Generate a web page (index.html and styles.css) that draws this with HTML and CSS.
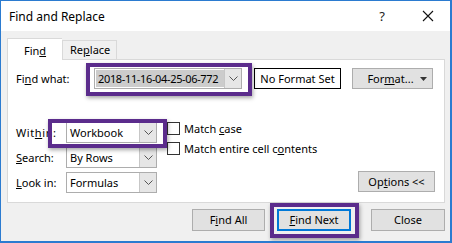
FILE: index.html
```html
<!DOCTYPE html>
<html lang="en">
<head>
  <meta charset="UTF-8">
  <title>Find and Replace</title>
  <link rel="stylesheet" href="styles.css">
</head>
<body>
  <div class="window">
    <!-- Title bar -->
    <div class="titlebar">
      <span class="title">Find and Replace</span>
      <span class="help">?</span>
      <svg class="close-x" width="12" height="12" viewBox="0 0 12 12">
        <path d="M1 1 L11 11 M11 1 L1 11" stroke="#111" stroke-width="1.1" fill="none"/>
      </svg>
    </div>

    <div class="dialog">
      <div class="tabs">
        <div class="tab active">Fin<u>d</u></div>
        <div class="tab">Re<u>p</u>lace</div>
      </div>

      <div class="panel">
        <!-- Find what row -->
        <div class="row find-row">
          <label class="label">Fi<u>n</u>d what:</label>
          <div class="combo combo-find">
            <span class="combo-text">2018-11-16-04-25-06-772</span>
            <span class="combo-btn">
              <svg width="9" height="5" viewBox="0 0 9 5"><path d="M0.5 0.5 L4.5 4.5 L8.5 0.5" stroke="#555" fill="none"/></svg>
            </span>
          </div>
          <div class="format-box">No Format Set</div>
          <div class="btn btn-format">For<u>m</u>at...
            <svg class="caret" width="7" height="4" viewBox="0 0 7 4"><path d="M0 0 H7 L3.5 4 Z" fill="#333"/></svg>
          </div>
        </div>

        <div class="options">
          <div class="selects">
            <div class="row sel-row">
              <label class="label short wide">Wit<u>h</u>in:</label>
              <div class="combo combo-small">
                <span class="combo-text">Workbook</span>
                <span class="combo-btn">
                  <svg width="9" height="5" viewBox="0 0 9 5"><path d="M0.5 0.5 L4.5 4.5 L8.5 0.5" stroke="#555" fill="none"/></svg>
                </span>
              </div>
            </div>
            <div class="row sel-row">
              <label class="label short"><u>S</u>earch:</label>
              <div class="combo combo-small">
                <span class="combo-text">By Rows</span>
                <span class="combo-btn">
                  <svg width="9" height="5" viewBox="0 0 9 5"><path d="M0.5 0.5 L4.5 4.5 L8.5 0.5" stroke="#555" fill="none"/></svg>
                </span>
              </div>
            </div>
            <div class="row sel-row">
              <label class="label short"><u>L</u>ook in:</label>
              <div class="combo combo-small">
                <span class="combo-text">Formulas</span>
                <span class="combo-btn">
                  <svg width="9" height="5" viewBox="0 0 9 5"><path d="M0.5 0.5 L4.5 4.5 L8.5 0.5" stroke="#555" fill="none"/></svg>
                </span>
              </div>
            </div>
          </div>

          <div class="checks">
            <div class="check"><span class="box"></span><span>Match <u>c</u>ase</span></div>
            <div class="check"><span class="box"></span><span>Match entire cell c<u>o</u>ntents</span></div>
          </div>

          <div class="btn btn-options">Op<u>t</u>ions &lt;&lt;</div>
        </div>

        <!-- annotation highlights -->
        <div class="mark mark-find"></div>
        <div class="mark mark-within"></div>
      </div>

      <div class="footer">
        <div class="btn btn-foot find-all">F<u>i</u>nd All</div>
        <div class="btn btn-foot default"><u>F</u>ind Next</div>
        <div class="btn btn-foot close">Close</div>
        <div class="mark mark-next"></div>
      </div>
    </div>
  </div>
</body>
</html>
```

FILE: styles.css
```css
body {
  margin: 0;
  padding: 0;
  background: #fff;
  font-family: "Noto Sans", "Open Sans", sans-serif;
  font-size: 11px;
  color: #000;
}

.window {
  width: 452px;
  height: 243px;
  box-sizing: border-box;
  border: 1px solid #2b7bd0;
  border-width: 1px 2px 2px 1px;
  display: flex;
  flex-direction: column;
  overflow: hidden;
}

.titlebar {
  height: 30px;
  background: #fff;
  display: flex;
  align-items: center;
  padding-left: 8px;
}

.title {
  font-size: 12px;
  flex: 1;
}

.help {
  font-size: 13px;
  width: 46px;
  text-align: center;
  color: #222;
}

.close-x {
  margin: 0 16px 0 17px;
}

.dialog {
  flex: 1;
  background: #f0f0f0;
  padding: 7px 5px 0 6px;
}

.tabs {
  display: flex;
  align-items: flex-end;
  height: 21px;
}

.tab {
  height: 18px;
  padding: 0 7px;
  width: 39px;
  text-align: center;
  line-height: 17px;
  background: #f0f0f0;
  border: 1px solid #d9d9d9;
  border-bottom: none;
}

.tab.active {
  height: 21px;
  background: #fff;
  width: 30px;
  padding: 0 12px;
  line-height: 23px;
  position: relative;
  top: 1px;
  z-index: 1;
  border-right: none;
}

.panel {
  position: relative;
  box-sizing: border-box;
  background: #fff;
  border: 1px solid #d9d9d9;
  height: 144px;
  padding: 8px 9px 0 8px;
}

.row {
  display: flex;
  align-items: center;
}

.label {
  width: 78px;
}

.label.short {
  width: 50px;
}

.label.wide {
  letter-spacing: 0.6px;
}

.combo {
  height: 19px;
  border: 1px solid #adadad;
  background: #fff;
  display: flex;
}

.combo-find {
  width: 146px;
}

.combo-small {
  width: 89px;
}

.combo-text {
  flex: 1;
  padding-left: 3px;
  line-height: 19px;
  white-space: nowrap;
  overflow: hidden;
}

.combo-find .combo-text {
  background: #cccccc;
  margin: 1px 0 1px 1px;
  line-height: 17px;
  padding-left: 2px;
  letter-spacing: -0.35px;
}

.combo-btn {
  width: 16px;
  border-left: 1px solid #c7c7c7;
  background: #e6e6e6;
  display: flex;
  align-items: center;
  justify-content: center;
}

.format-box {
  margin-left: 12px;
  width: 85px;
  height: 19px;
  border: 1px solid #000;
  text-align: center;
  line-height: 19px;
}

.btn {
  background: #e1e1e1;
  border: 1px solid #adadad;
  height: 19px;
  line-height: 19px;
  text-align: center;
}

.btn-format {
  margin-left: 11px;
  width: 79px;
  position: relative;
  text-indent: -4px;
}

.caret {
  position: absolute;
  right: 5px;
  top: 8px;
}

.options {
  display: flex;
  margin-top: 33px;
}

.selects {
  display: flex;
  flex-direction: column;
  gap: 4px;
}

.checks {
  margin-left: 10px;
  display: flex;
  flex-direction: column;
  gap: 7px;
}

.check {
  display: flex;
  align-items: center;
  height: 13px;
}

.box {
  width: 11px;
  height: 11px;
  border: 1px solid #333;
  background: #fff;
  margin-right: 4px;
}

.btn-options {
  margin-left: auto;
  margin-top: 49px;
  width: 75px;
}

.footer {
  display: flex;
  justify-content: flex-end;
  padding-top: 6px;
  position: relative;
}

.btn-foot {
  width: 72px;
  height: 20px;
  line-height: 20px;
}

.btn-foot.find-all {
  width: 71px;
}

.btn-foot.default {
  margin-left: 12px;
  border: 2px solid #0078d7;
  width: 70px;
  height: 18px;
  line-height: 18px;
}

.btn-foot.close {
  margin-left: 20px;
}

.mark {
  position: absolute;
  border: 4px solid #5b2c8c;
  box-shadow: 1px 2px 4px rgba(0, 0, 0, 0.35);
  pointer-events: none;
}

.mark-find {
  left: 78px;
  top: 3px;
  width: 158px;
  height: 25px;
}

.mark-within {
  left: 40px;
  top: 59px;
  width: 111px;
  height: 21px;
}

.mark-next {
  left: 263px;
  top: 0;
  width: 81px;
  height: 27px;
}
```
